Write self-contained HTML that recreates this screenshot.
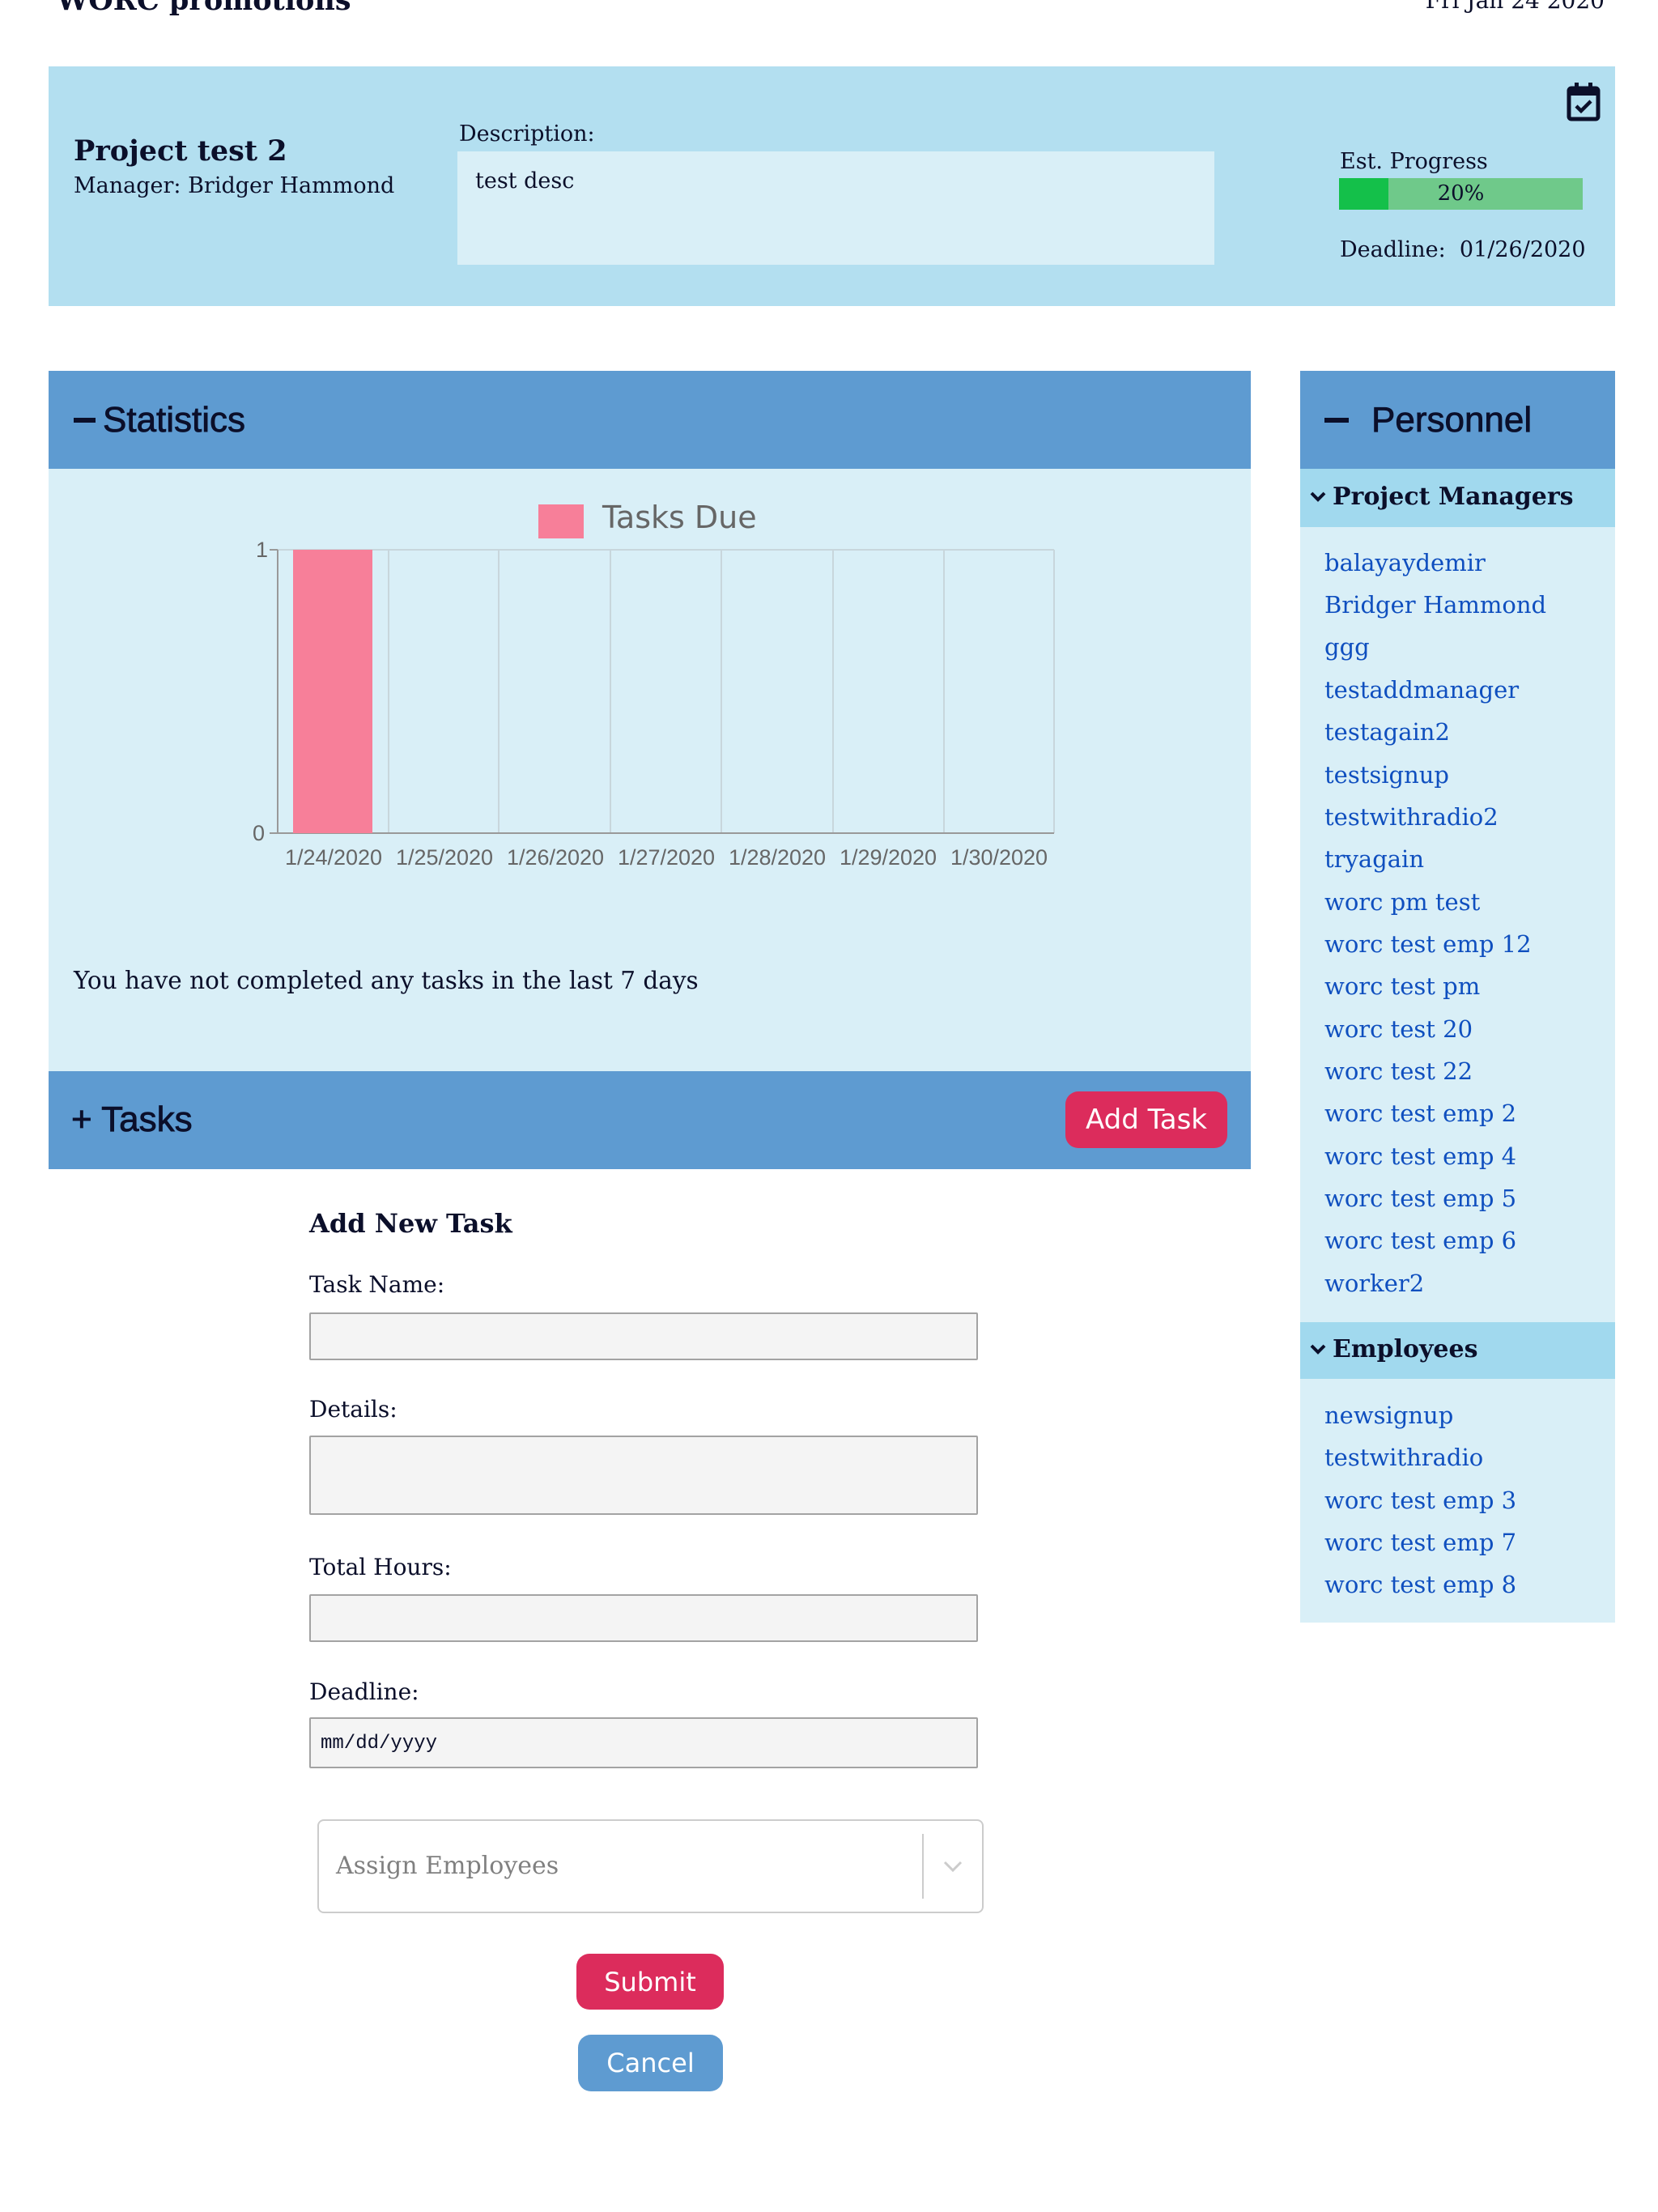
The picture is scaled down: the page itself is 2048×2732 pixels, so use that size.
<!DOCTYPE html>
<html><head><meta charset="utf-8"><style>
*{box-sizing:border-box;margin:0;padding:0}
body{width:2048px;height:2732px;background:#fff;position:relative;overflow:hidden;font-family:"DejaVu Serif","Liberation Serif",serif;color:#0b0f2a}
.a{position:absolute;white-space:nowrap}
.sans{font-family:"DejaVu Sans","Liberation Sans",sans-serif}
.lnk{color:#0f4fbf;font-size:29px;position:absolute;left:1636px;white-space:nowrap}
.inp{position:absolute;left:382px;width:826px;background:#f4f4f4;border:2px solid #a3a3a3;border-radius:2px}
.lbl{position:absolute;left:382px;font-size:28px;white-space:nowrap}
.btn{position:absolute;color:#fff;font-family:"DejaVu Sans","Liberation Sans",sans-serif;display:flex;align-items:center;justify-content:center;border-radius:16px}
.hd{font-family:"Liberation Sans",sans-serif;font-size:44px;font-weight:normal;-webkit-text-stroke:0.8px #0b0f2a}
</style></head><body>
<div class="a" style="left:70px;top:-20px;font-size:35px;font-weight:bold">WORC promotions</div>
<div class="a" style="right:66px;top:-16px;font-size:28px">Fri Jan 24 2020</div>

<div class="a" style="left:60px;top:82px;width:1935px;height:296px;background:#b3dff0"></div>
<div class="a" style="left:91px;top:166px;font-size:35px;font-weight:bold">Project test 2</div>
<div class="a" style="left:91px;top:214px;font-size:27px">Manager: Bridger Hammond</div>
<div class="a" style="left:567px;top:150px;font-size:27px">Description:</div>
<div class="a" style="left:565px;top:187px;width:935px;height:140px;background:#d9eff7"></div>
<div class="a" style="left:587px;top:208px;font-size:27px">test desc</div>
<div class="a" style="left:1655px;top:184px;font-size:27px">Est. Progress</div>
<div class="a" style="left:1654px;top:220px;width:301px;height:39px;background:#6fc98a"></div>
<div class="a" style="left:1654px;top:220px;width:61px;height:39px;background:#14c04a"></div>
<div class="a" style="left:1654px;top:220px;width:301px;height:39px;text-align:center;font-size:26px;line-height:39px">20%</div>
<div class="a" style="left:1655px;top:293px;font-size:27px">Deadline:&nbsp; 01/26/2020</div>
<svg class="a" style="left:1934px;top:100px" width="44" height="50" viewBox="0 0 44 50"><rect x="4" y="9" width="36" height="38" rx="3" fill="none" stroke="#0b0f2a" stroke-width="5"/><rect x="4" y="9" width="36" height="9" fill="#0b0f2a"/><rect x="11" y="2" width="5" height="10" fill="#0b0f2a"/><rect x="28" y="2" width="5" height="10" fill="#0b0f2a"/><path d="M13 31l6 6 12-12" fill="none" stroke="#0b0f2a" stroke-width="4.5"/></svg>

<div class="a" style="left:60px;top:458px;width:1485px;height:121px;background:#5e9bd1"></div>
<div class="a" style="left:91px;top:516px;width:27px;height:6px;background:#0b0f2a"></div>
<div class="a hd" style="left:127px;top:494px">Statistics</div>
<div class="a" style="left:60px;top:579px;width:1485px;height:744px;background:#d9eff7"></div>
<div class="a" style="left:665px;top:623px;width:56px;height:42px;background:#f77f99"></div>
<div class="a sans" style="left:744px;top:617px;font-size:38px;color:#666">Tasks Due</div>
<svg class="a" style="left:300px;top:660px" width="1020" height="420">
<g stroke="#c8d6dc" stroke-width="2">
<line x1="43" y1="19" x2="1002" y2="19"/>
<line x1="180" y1="19" x2="180" y2="369"/><line x1="316" y1="19" x2="316" y2="369"/><line x1="454" y1="19" x2="454" y2="369"/><line x1="591" y1="19" x2="591" y2="369"/><line x1="729" y1="19" x2="729" y2="369"/><line x1="866" y1="19" x2="866" y2="369"/><line x1="1002" y1="19" x2="1002" y2="369"/>
</g>
<g stroke="#999" stroke-width="2"><line x1="43" y1="19" x2="43" y2="369"/><line x1="33" y1="369" x2="1002" y2="369"/><line x1="33" y1="19" x2="43" y2="19"/></g>
<rect x="62" y="19" width="98" height="350" fill="#f77f99"/>
<g font-family="Liberation Sans,sans-serif" font-size="27" fill="#666">
<text x="16" y="28">1</text><text x="12" y="378">0</text>
<g text-anchor="middle"><text x="112" y="408">1/24/2020</text><text x="249" y="408">1/25/2020</text><text x="386" y="408">1/26/2020</text><text x="523" y="408">1/27/2020</text><text x="660" y="408">1/28/2020</text><text x="797" y="408">1/29/2020</text><text x="934" y="408">1/30/2020</text></g></g>
</svg>
<div class="a" style="left:91px;top:1194px;font-size:29.5px">You have not completed any tasks in the last 7 days</div>

<div class="a" style="left:60px;top:1323px;width:1485px;height:121px;background:#5e9bd1"></div>
<div class="a hd" style="left:88px;top:1358px">+ Tasks</div>
<div class="btn" style="left:1316px;top:1348px;width:200px;height:70px;font-size:34px;background:#dc2c5c">Add Task</div>

<div class="a" style="left:382px;top:1492px;font-size:32px;font-weight:bold">Add New Task</div>
<div class="lbl" style="top:1570px">Task Name:</div>
<div class="inp" style="top:1621px;height:59px"></div>
<div class="lbl" style="top:1724px">Details:</div>
<div class="inp" style="top:1773px;height:98px"></div>
<div class="lbl" style="top:1919px">Total Hours:</div>
<div class="inp" style="top:1969px;height:59px"></div>
<div class="lbl" style="top:2073px">Deadline:</div>
<div class="inp" style="top:2121px;height:63px"></div>
<div class="a" style="left:396px;top:2140px;font-family:'Liberation Mono',monospace;font-size:24px">mm/dd/yyyy</div>
<div class="a" style="left:392px;top:2247px;width:823px;height:116px;background:#fff;border:2px solid #ccc;border-radius:8px"></div>
<div class="a" style="left:415px;top:2287px;font-size:30px;color:#808080">Assign Employees</div>
<div class="a" style="left:1139px;top:2265px;width:2px;height:80px;background:#ccc"></div>
<svg class="a" style="left:1164px;top:2296px" width="26" height="18"><path d="M3 4l10 10 10-10" fill="none" stroke="#ccc" stroke-width="3"/></svg>
<div class="btn" style="left:712px;top:2413px;width:182px;height:69px;font-size:32px;background:#dc2c5c">Submit</div>
<div class="btn" style="left:714px;top:2513px;width:179px;height:70px;font-size:32px;background:#5e9bd1">Cancel</div>

<div class="a" style="left:1606px;top:458px;width:389px;height:121px;background:#5e9bd1"></div>
<div class="a" style="left:1636px;top:516px;width:30px;height:6px;background:#0b0f2a"></div>
<div class="a hd" style="left:1694px;top:494px">Personnel</div>
<div class="a" style="left:1606px;top:579px;width:389px;height:1425px;background:#d9eff7"></div>
<div class="a" style="left:1606px;top:579px;width:389px;height:72px;background:#a1d9ee"></div>
<svg class="a" style="left:1618px;top:606px" width="20" height="16"><path d="M2 3l8 8 8-8" fill="none" stroke="#0b0f2a" stroke-width="4"/></svg>
<div class="a" style="left:1646px;top:596px;font-size:30px;font-weight:bold">Project Managers</div>
<div class="a" style="left:1606px;top:1633px;width:389px;height:70px;background:#a1d9ee"></div>
<svg class="a" style="left:1618px;top:1659px" width="20" height="16"><path d="M2 3l8 8 8-8" fill="none" stroke="#0b0f2a" stroke-width="4"/></svg>
<div class="a" style="left:1646px;top:1649px;font-size:30px;font-weight:bold">Employees</div>
<div class="lnk" style="top:678px">balayaydemir</div>
<div class="lnk" style="top:730px">Bridger Hammond</div>
<div class="lnk" style="top:782px">ggg</div>
<div class="lnk" style="top:835px">testaddmanager</div>
<div class="lnk" style="top:887px">testagain2</div>
<div class="lnk" style="top:940px">testsignup</div>
<div class="lnk" style="top:992px">testwithradio2</div>
<div class="lnk" style="top:1044px">tryagain</div>
<div class="lnk" style="top:1097px">worc pm test</div>
<div class="lnk" style="top:1149px">worc test emp 12</div>
<div class="lnk" style="top:1201px">worc test pm</div>
<div class="lnk" style="top:1254px">worc test 20</div>
<div class="lnk" style="top:1306px">worc test 22</div>
<div class="lnk" style="top:1358px">worc test emp 2</div>
<div class="lnk" style="top:1411px">worc test emp 4</div>
<div class="lnk" style="top:1463px">worc test emp 5</div>
<div class="lnk" style="top:1515px">worc test emp 6</div>
<div class="lnk" style="top:1568px">worker2</div>
<div class="lnk" style="top:1731px">newsignup</div>
<div class="lnk" style="top:1783px">testwithradio</div>
<div class="lnk" style="top:1836px">worc test emp 3</div>
<div class="lnk" style="top:1888px">worc test emp 7</div>
<div class="lnk" style="top:1940px">worc test emp 8</div>
</body></html>
